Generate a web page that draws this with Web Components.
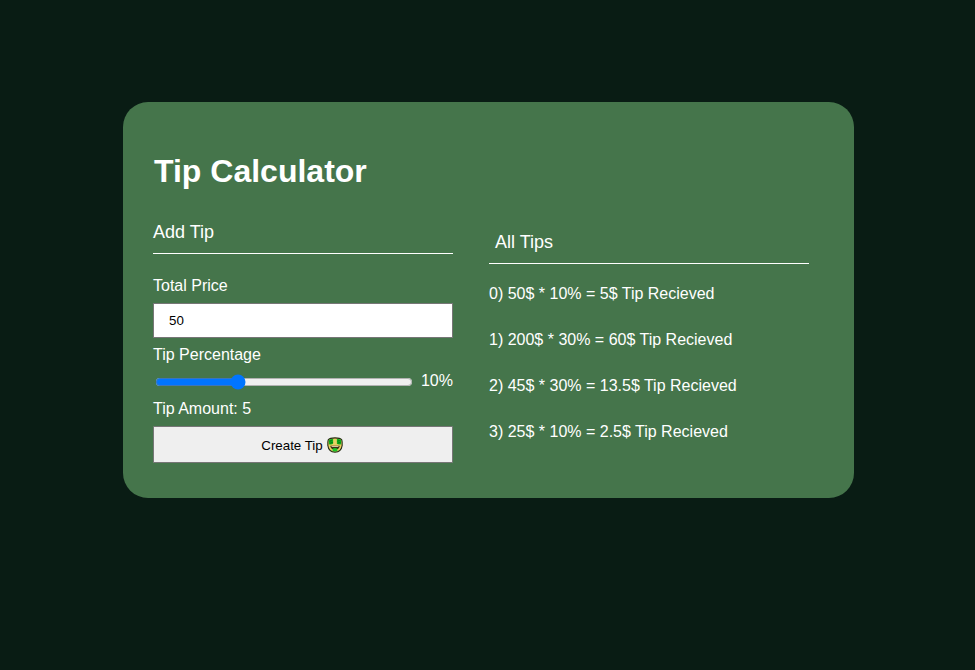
<!DOCTYPE html>
<html lang="en">
<head>
<meta charset="utf-8">
<title>Tip Calculator</title>
<style>
html,body{margin:0;height:100%}
body{background:#091c14;color:#fff;font:16px/18px "Liberation Sans",Arial,sans-serif;overflow:hidden}
</style>
</head>
<body>
<tip-calculator></tip-calculator>
<script>
const define = (name, html) => {
  const template = document.createElement('template');
  template.innerHTML = html;
  customElements.define(name, class extends HTMLElement {
    constructor() {
      super();
      this.attachShadow({mode: 'open'}).append(template.content.cloneNode(true));
    }
  });
};

define('section-heading', `
<style>
:host{display:block;box-sizing:border-box;height:32px;border-bottom:1px solid #fff;font-size:18px;line-height:20px}
</style><slot></slot>`);

define('money-face', `
<style>:host{display:inline-block;width:16px;height:16px}svg{display:block}</style>
<svg width="16" height="16" viewBox="0 0 17 17">
<path d="M1.3 3.1Q3 .9 8.5.9T15.7 3.1Q16.3 5 16.1 9 15.2 15.9 8.5 16.1 1.8 15.9.9 9 .7 5 1.3 3.1Z" fill="#e8d062" stroke="#262b16" stroke-width="1.2"/>
<path d="M1.9 3.2Q4 1.6 6.5 2.2V7.3Q4.5 8.6 2.1 7.6ZM10.5 2.2Q13 1.6 15.1 3.2L14.9 7.6Q12.5 8.6 10.5 7.3Z" fill="#10b41c"/>
<path d="M5.6 3.8Q3.3 3 3.3 4.5T5.5 5.7 3.2 6.9M13.7 3.8Q11.4 3 11.4 4.5T13.6 5.7 11.3 6.9" fill="none" stroke="#087012" stroke-width=".7"/>
<path d="M3.4 9.2H13.6Q12.8 13.4 8.5 13.4T3.4 9.2Z" fill="#30240c"/>
<path d="M4.8 9.8H12.2V10.7H4.8Z" fill="#fff4c8"/>
<path d="M6 12.2Q8.5 11.4 11 12.2V14Q10.8 15.4 8.5 15.4T6 14Z" fill="#19c52a"/>
</svg>`);

define('tip-form', `
<style>
:host{display:flex;flex-direction:column;width:300px}
section-heading{margin-bottom:23px}
.field{box-sizing:border-box;width:300px;height:35px;margin:8px 0 8px;padding:0 15px;border:1px solid #767676;border-radius:0;background:#fff;color:#000;font:13.333px "Liberation Sans",Arial,sans-serif;outline:0}
.range{display:flex;justify-content:space-between;align-items:center;height:18px;margin:8px 0 10px}
.range input{width:258px;height:16px;margin:2px 0 0 2px;accent-color:#0075ff}
button{display:flex;align-items:center;justify-content:center;gap:4px;box-sizing:border-box;width:300px;height:37px;margin:8px 0 0;padding:1px 2px 0 0;border:1px solid #767676;border-radius:1px;background:#efefef;color:#000;font:13.333px "Liberation Sans",Arial,sans-serif}
</style>
<section-heading>Add Tip</section-heading>
<label for="price">Total Price</label>
<input id="price" class="field" value="50">
<label for="percent">Tip Percentage</label>
<div class="range"><input id="percent" type="range" min="0" max="100" value="31"><span>10%</span></div>
<div>Tip Amount: 5</div>
<button><span>Create Tip</span><money-face></money-face></button>`);

define('tip-list', `
<style>
:host{display:flex;flex-direction:column;width:320px;padding-top:10px}
section-heading{padding-left:6px;margin-bottom:21px}
::slotted(p){margin:0 0 28px}
</style>
<section-heading>All Tips</section-heading><slot></slot>`);

define('tip-calculator', `
<style>
:host{display:block;padding:102px 121px 0 123px}
main{box-sizing:border-box;height:396px;border-radius:25px;background:#45754b;padding:50px 30px 0}
h1{margin:0 0 32px 1px;font-size:32px;line-height:38px}
.columns{display:flex;align-items:flex-start;gap:36px}
</style>
<main><h1>Tip Calculator</h1>
<div class="columns"><tip-form></tip-form>
<tip-list><p>0) 50$ * 10% = 5$ Tip Recieved</p><p>1) 200$ * 30% = 60$ Tip Recieved</p><p>2) 45$ * 30% = 13.5$ Tip Recieved</p><p>3) 25$ * 10% = 2.5$ Tip Recieved</p></tip-list></div></main>`);
</script>
</body>
</html>
